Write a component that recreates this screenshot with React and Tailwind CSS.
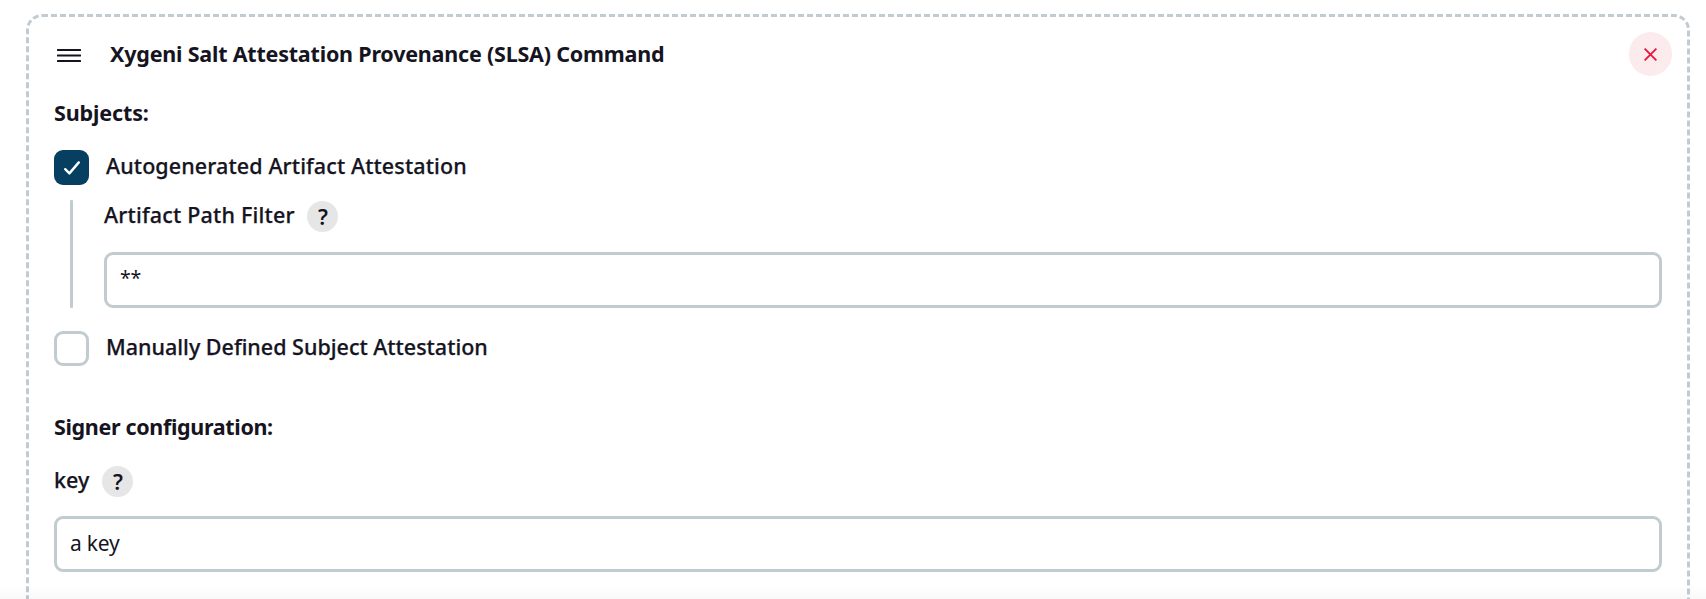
import React from "react";

function Checkbox({ checked }) {
  return checked ? (
    <span role="checkbox" aria-checked="true" className="flex h-[35px] w-[35px] shrink-0 items-center justify-center rounded-[9px] bg-[#073f61]">
      <svg width="35" height="35" viewBox="0 0 35 35" fill="none" stroke="#fff" strokeWidth="2.4" strokeLinecap="round" strokeLinejoin="round">
        <path d="M11.2 19.2 15.4 23.4 24.8 12.4" />
      </svg>
    </span>
  ) : (
    <span role="checkbox" aria-checked="false" className="h-[35px] w-[35px] shrink-0 rounded-[9px] border-[3px] border-[#c2cbd0] bg-white" />
  );
}

function Help() {
  return (
    <span className="flex h-[31px] w-[31px] shrink-0 items-center justify-center rounded-full bg-[#e6e6e6] pl-px text-[21.5px] leading-[31px] font-semibold">
      ?
    </span>
  );
}

function Field({ children }) {
  return (
    <div className="h-[56px] rounded-[9px] border-[3px] border-[#c2cbd0] bg-white px-[13px] pt-[9px] text-[21px] leading-[30px] tracking-[-0.2px]">
      {children}
    </div>
  );
}

export default function App() {
  return (
    <div className="relative h-[599px] overflow-hidden bg-white pt-[14px] pr-[16px] pl-[26px] font-['Noto_Sans',sans-serif] text-[21.5px] leading-[30px] whitespace-nowrap text-[#15141f]">
      <div className="flex h-[680px] flex-col rounded-[16px] border-[3px] border-dashed border-[#c2cbd0] pr-[25px] pl-[25px]">
        <header className="-mr-[10px] flex h-[74px] items-center">
          <svg width="24" height="13" viewBox="0 0 24 13" className="mt-[3px] ml-[3px] shrink-0" fill="#15141f">
            <rect y="0" width="24" height="2" rx="0.5" />
            <rect y="5.5" width="24" height="2" rx="0.5" />
            <rect y="11" width="24" height="2" rx="0.5" />
          </svg>
          <h2 className="ml-[29px] font-bold tracking-[-0.21px]">Xygeni Salt Attestation Provenance (SLSA) Command</h2>
          <button aria-label="Remove" className="ml-auto flex h-[44px] w-[43px] items-center justify-center rounded-full bg-[#fcebed]">
            <svg width="13" height="13" viewBox="0 0 13 13" fill="none" stroke="#e5163a" strokeWidth="1.8">
              <path d="M0.6 0.6 12.4 12.4M12.4 0.6 0.6 12.4" />
            </svg>
          </button>
        </header>

        <h3 className="mt-[7px] font-bold tracking-[-0.13px]">Subjects:</h3>

        <div className="mt-[22px] flex h-[35px] gap-[17px]">
          <Checkbox checked />
          <span className="pt-px font-medium tracking-[0.11px] [-webkit-text-stroke:0.25px]">Autogenerated Artifact Attestation</span>
        </div>

        <div className="mt-[15px] flex h-[108px] pl-[16px]">
          <div className="w-[3px] rounded-[1px] bg-[#c2cbd0]" />
          <div className="ml-[31px] flex flex-1 flex-col">
            <div className="flex">
              <span className="w-[203px] font-medium tracking-[0.19px] [-webkit-text-stroke:0.25px]">Artifact Path Filter</span>
              <div className="pt-px"><Help /></div>
            </div>
            <div className="mt-auto"><Field><span className="relative -top-[2px] text-[19.5px]">**</span></Field></div>
          </div>
        </div>

        <div className="mt-[23px] flex h-[35px] gap-[17px]">
          <Checkbox />
          <span className="pt-px font-medium [-webkit-text-stroke:0.25px]">Manually Defined Subject Attestation</span>
        </div>

        <h3 className="mt-[46px] font-bold tracking-[-0.34px]">Signer configuration:</h3>
        <div className="mt-[23px] flex h-[32px]">
          <span className="w-[48px] font-medium [-webkit-text-stroke:0.25px]">key</span>
          <div className="pt-px"><Help /></div>
        </div>
        <div className="mt-[19px]"><Field>a key</Field></div>
      </div>
      <div className="absolute inset-x-0 bottom-0 h-[14px] bg-linear-to-b from-transparent to-black/[0.025]" />
    </div>
  );
}
